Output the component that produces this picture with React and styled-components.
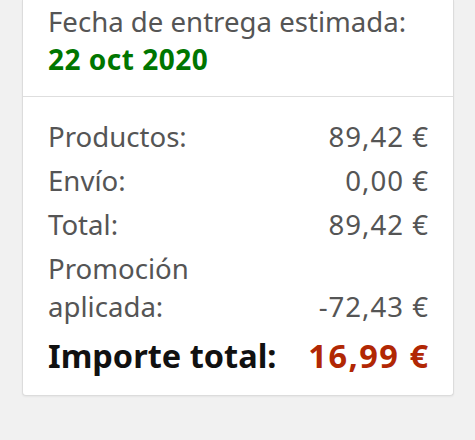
import React from "react";
import styled, { createGlobalStyle } from "styled-components";

const Global = createGlobalStyle`
  html, body { margin: 0; padding: 0; background: #f1f1f1; }
  body { font-family: "Noto Sans", Roboto, sans-serif; }
`;

const Page = styled.div`
  padding: 0 21px 44px 22px;
`;

const Card = styled.div`
  background: #fff;
  border: 1px solid #dcdcdc;
  border-top: none;
  border-radius: 0 0 4px 4px;
  box-shadow: 0 1px 2px rgba(0, 0, 0, 0.05);
`;

const Section = styled.div`
  padding: ${(p) => p.$pad};
  & + & { border-top: 1px solid #dedede; }
`;

const Label = styled.div`
  font-size: 27.6px;
  line-height: 38px;
  color: #555555;
`;

const DateText = styled.div`
  font-size: 28px;
  line-height: 38px;
  font-weight: 700;
  letter-spacing: 0.5px;
  color: #007600;
`;

const Rows = styled.div`
  display: flex;
  flex-direction: column;
  gap: 6px;
`;

const Row = styled.div`
  display: flex;
  justify-content: space-between;
  align-items: flex-end;
  margin-top: ${(p) => (p.$strong ? "3px" : "0")};
  font-size: ${(p) => (p.$strong ? "32.5px" : "27.6px")};
  line-height: ${(p) => (p.$strong ? "44px" : "38px")};
  font-weight: ${(p) => (p.$strong ? 700 : 400)};
  color: ${(p) => (p.$strong ? "#111111" : "#555555")};
`;

const Name = styled.span`
  max-width: 160px;
`;

const Amount = styled.span`
  white-space: nowrap;
  letter-spacing: ${(p) => (p.$big ? "1.5px" : "1px")};
  margin-right: ${(p) => (p.$big ? "-1.5px" : "-1px")};
  color: ${(p) => p.$color || "inherit"};
`;

const rows = [
  ["Productos:", "89,42 €"],
  ["Envío:", "0,00 €"],
  ["Total:", "89,42 €"],
  ["Promoción aplicada:", "-72,43 €"],
];

export default function App() {
  return (
    <>
      <Global />
      <Page>
        <Card>
          <Section $pad="2px 25px 18px">
            <Label>Fecha de entrega estimada:</Label>
            <DateText>22 oct 2020</DateText>
          </Section>
          <Section $pad="20px 25px 17px">
            <Rows>
              {rows.map(([n, a]) => (
                <Row key={n}>
                  <Name>{n}</Name>
                  <Amount>{a}</Amount>
                </Row>
              ))}
              <Row $strong>
                <span>Importe total:</span>
                <Amount $big $color="#b12704">16,99 €</Amount>
              </Row>
            </Rows>
          </Section>
        </Card>
      </Page>
    </>
  );
}
